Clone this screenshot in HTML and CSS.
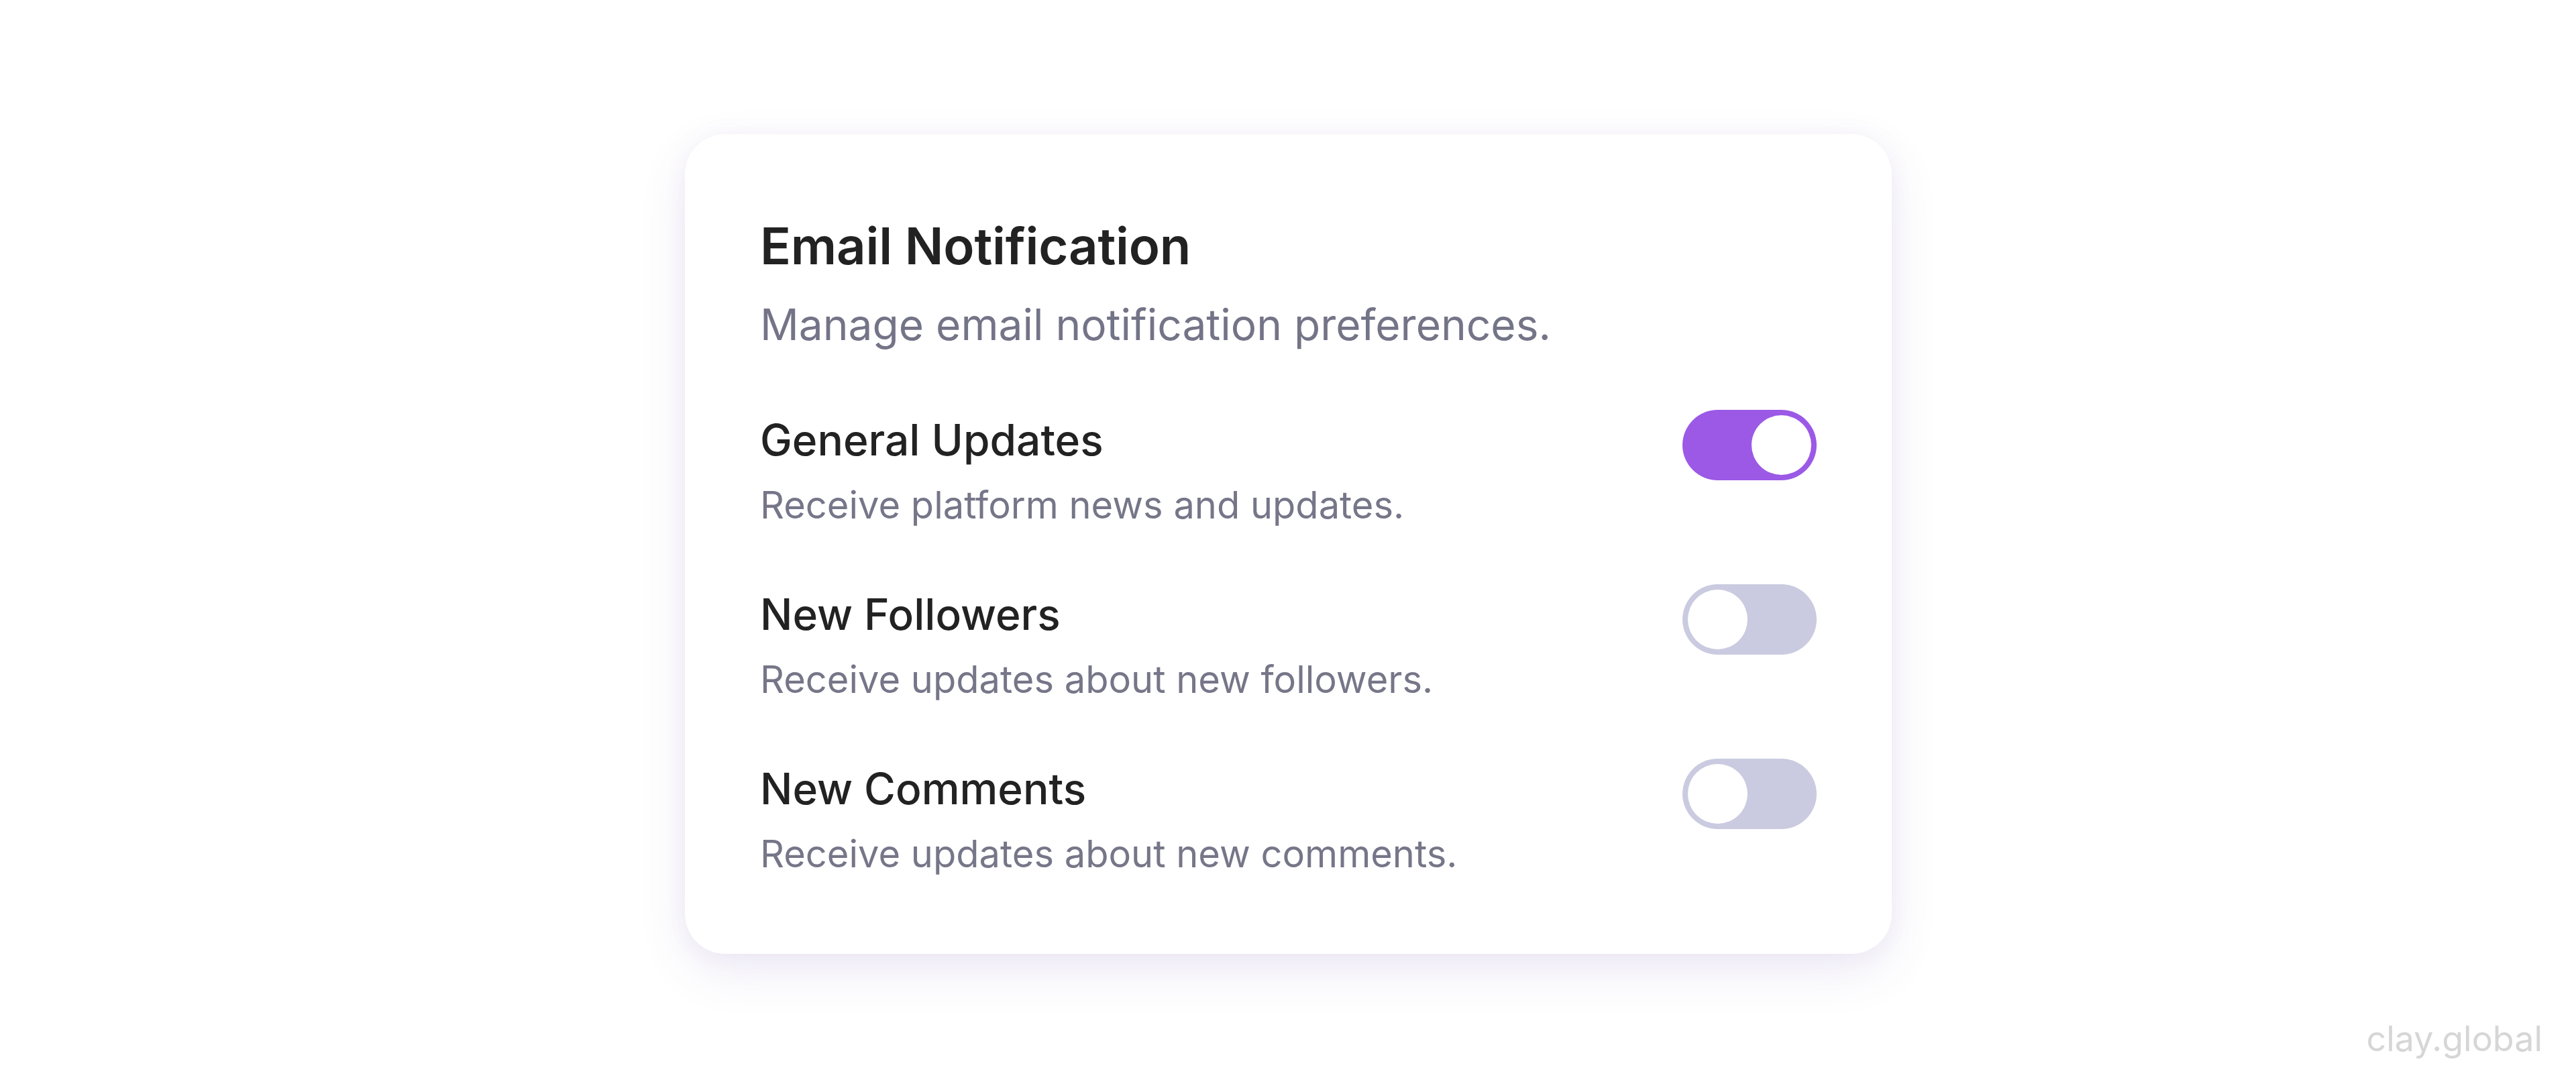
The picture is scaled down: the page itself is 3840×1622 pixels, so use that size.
FILE: index.html
```html
<!DOCTYPE html>
<html lang="en">
<head>
<meta charset="utf-8">
<title>Email Notification</title>
<link rel="stylesheet" href="styles.css">
</head>
<body>
<main class="stage">
  <section class="card">
    <header class="card-head">
      <h1 class="card-title">Email Notification</h1>
      <p class="card-sub">Manage email notification preferences.</p>
    </header>
    <ul class="pref-list">
      <li class="pref">
        <div class="pref-text">
          <span class="pref-title">General Updates</span>
          <span class="pref-desc">Receive platform news and updates.</span>
        </div>
        <span class="toggle toggle-on" role="switch" aria-checked="true"><span class="knob"></span></span>
      </li>
      <li class="pref">
        <div class="pref-text">
          <span class="pref-title">New Followers</span>
          <span class="pref-desc">Receive updates about new followers.</span>
        </div>
        <span class="toggle" role="switch" aria-checked="false"><span class="knob"></span></span>
      </li>
      <li class="pref">
        <div class="pref-text">
          <span class="pref-title">New Comments</span>
          <span class="pref-desc">Receive updates about new comments.</span>
        </div>
        <span class="toggle" role="switch" aria-checked="false"><span class="knob"></span></span>
      </li>
    </ul>
  </section>
  <div class="watermark">clay.global</div>
</main>
</body>
</html>
```

FILE: styles.css
```css
* { box-sizing: border-box; }
html, body { margin: 0; padding: 0; }
body {
  background: #ffffff;
  font-family: Inter, "Noto Sans", "Liberation Sans", sans-serif;
  width: 3840px;
  height: 1622px;
  overflow: hidden;
}
.stage {
  position: relative;
  width: 3840px;
  height: 1622px;
  padding: 200px 0 0 1021px;
}
.card {
  width: 1799px;
  height: 1222px;
  background: #ffffff;
  border-radius: 60px;
  padding: 121px 112px 0 112px;
  box-shadow: 0 26px 70px rgba(110, 80, 170, 0.12), 0 0 34px rgba(110, 80, 170, 0.05);
}
.card-head { display: flex; flex-direction: column; gap: 34px; }
.card-title {
  margin: 0;
  font-size: 76px;
  line-height: 1.2;
  font-weight: 600;
  color: #222222;
  letter-spacing: -0.2px;
}
.card-sub {
  margin: 0;
  font-size: 64px;
  line-height: 1.2;
  font-weight: 400;
  color: #747488;
}
.pref-list {
  list-style: none;
  margin: 95px 0 0;
  padding: 0;
  display: flex;
  flex-direction: column;
  gap: 91px;
}
.pref {
  display: flex;
  justify-content: space-between;
  align-items: flex-start;
}
.pref-text { display: flex; flex-direction: column; gap: 25px; }
.pref-title {
  font-size: 64px;
  line-height: 1.2;
  font-weight: 500;
  color: #222222;
}
.pref-desc {
  font-size: 56px;
  line-height: 1.2;
  font-weight: 400;
  color: #767689;
}
.toggle {
  margin-top: -7px;
  width: 200px;
  height: 105px;
  border-radius: 53px;
  background: #cacbe0;
  padding: 8px;
  display: flex;
  justify-content: flex-start;
}
.toggle-on {
  background: #9b59e6;
  justify-content: flex-end;
}
.knob {
  width: 89px;
  height: 89px;
  border-radius: 50%;
  background: #ffffff;
}
.watermark {
  position: absolute;
  right: 50px;
  top: 1518px;
  font-size: 52px;
  line-height: 1.2;
  color: #d6d6d6;
  font-weight: 400;
}
```
